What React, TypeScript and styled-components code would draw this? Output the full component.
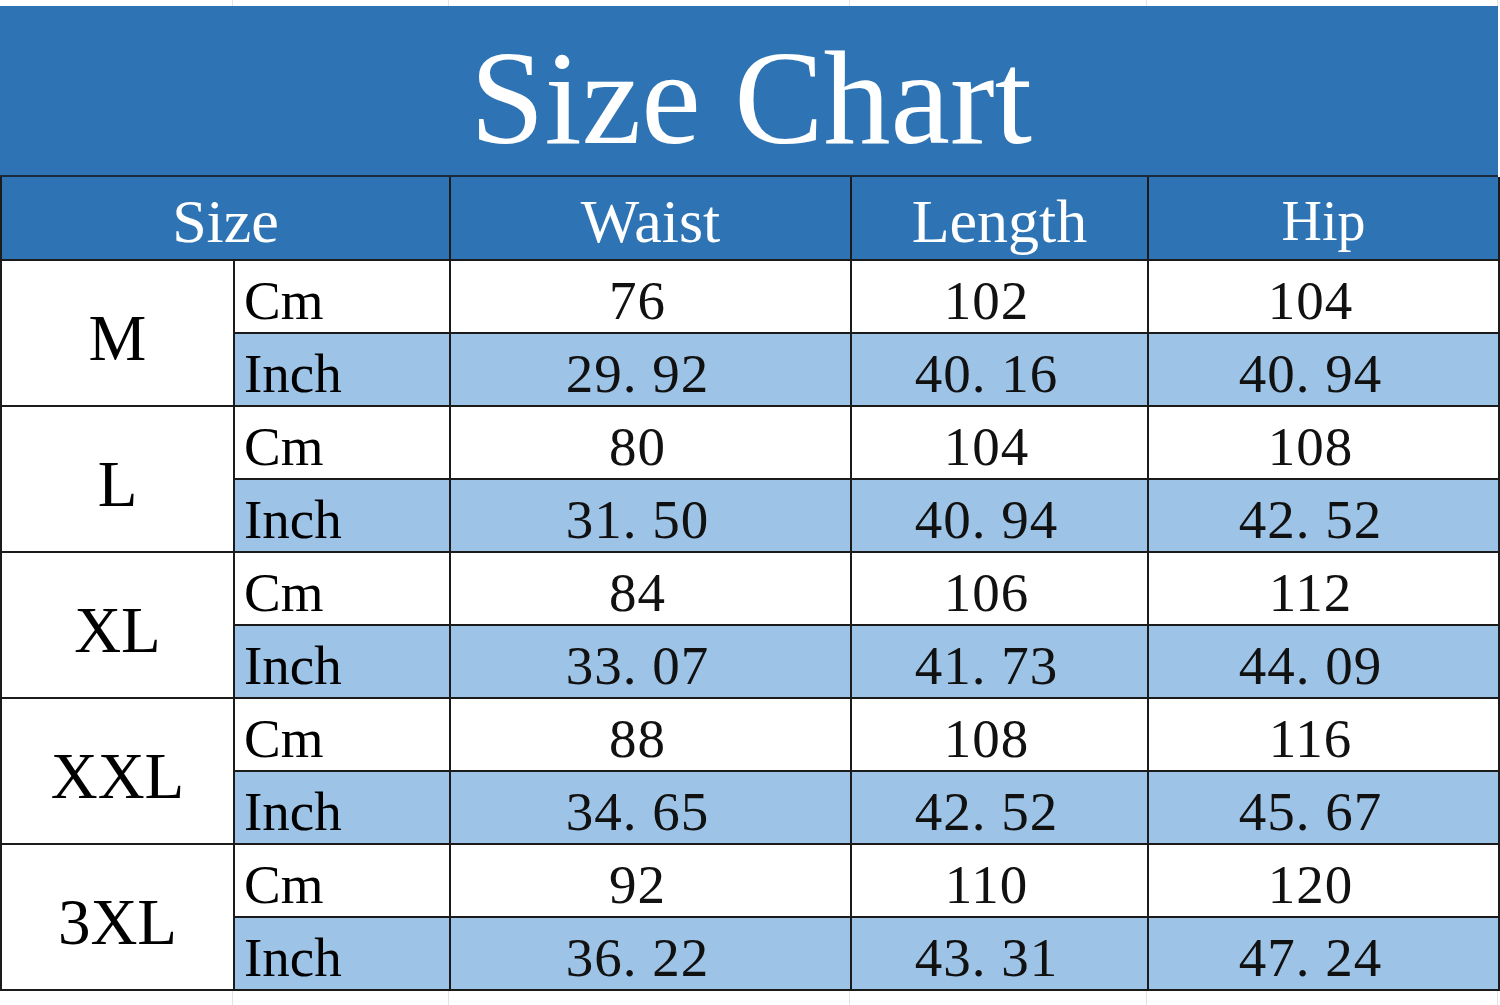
import React from 'react';
import styled, { createGlobalStyle } from 'styled-components';

type Row = { size: string; cm: string[]; inch: string[] };

const rows: Row[] = [
  { size: 'M', cm: ['76', '102', '104'], inch: ['29. 92', '40. 16', '40. 94'] },
  { size: 'L', cm: ['80', '104', '108'], inch: ['31. 50', '40. 94', '42. 52'] },
  { size: 'XL', cm: ['84', '106', '112'], inch: ['33. 07', '41. 73', '44. 09'] },
  { size: 'XXL', cm: ['88', '108', '116'], inch: ['34. 65', '42. 52', '45. 67'] },
  { size: '3XL', cm: ['92', '110', '120'], inch: ['36. 22', '43. 31', '47. 24'] },
];

const columns = [233, 216, 401, 297, 351];

const GlobalStyle = createGlobalStyle`
  body {
    margin: 0;
    background: #ffffff;
    font-family: 'Liberation Serif', 'Times New Roman', serif;
  }
`;

const Sheet = styled.div`
  width: 1500px;
  height: 1005px;
  overflow: hidden;
  background: #ffffff;
`;

// faint spreadsheet gridlines above and below the chart
const GridStrip = styled.div<{ $h: number }>`
  display: grid;
  grid-template-columns: ${columns.map((c) => `${c}px`).join(' ')} 2px;
  height: ${(p) => p.$h}px;

  > span {
    border-right: 1px solid #e3e3e3;
  }
`;

const TitleBar = styled.div`
  width: 1498px;
  height: 171px;
  background: #2e74b5;
  border-bottom: 2px solid #1b2a3a;
  display: flex;
  align-items: flex-end;
  justify-content: center;
  box-sizing: border-box;
`;

const Title = styled.h1`
  margin: 0 0 10px 4px;
  font-size: 134px;
  line-height: 1;
  font-weight: 400;
  color: #ffffff;
  font-family: 'Liberation Serif', 'Times New Roman', serif;
`;

const Table = styled.table`
  width: 1498px;
  border-collapse: collapse;
  table-layout: fixed;
  font-family: 'Liberation Serif', 'Times New Roman', serif;
`;

const HeadCell = styled.th<{ $small?: boolean }>`
  height: 76px;
  padding: 6px 0 0;
  background: #2e74b5;
  color: #ffffff;
  font-size: ${(p) => (p.$small ? 56 : 62)}px;
  font-weight: 400;
  text-align: center;
  border: 2px solid #1b1b1b;
  border-top: none;
`;

const SizeCell = styled.td`
  padding: 10px 0 0;
  background: #ffffff;
  color: #000000;
  font-size: 65px;
  text-align: center;
  border: 2px solid #1b1b1b;
`;

const UnitCell = styled.td<{ $shade?: boolean }>`
  height: 64px;
  padding: 7px 0 0 9px;
  background: ${(p) => (p.$shade ? '#9dc3e6' : '#ffffff')};
  color: #000000;
  font-size: 55px;
  text-align: left;
  border: 2px solid #1b1b1b;
`;

const ValueCell = styled.td<{ $shade?: boolean }>`
  height: 64px;
  padding: 7px 26px 0 0;
  background: ${(p) => (p.$shade ? '#9dc3e6' : '#ffffff')};
  color: #111111;
  font-size: 55px;
  letter-spacing: 1px;
  text-align: center;
  border: 2px solid #1b1b1b;
  white-space: pre;
`;

const App = () => {
  return (
    <Sheet>
      <GlobalStyle />
      <GridStrip $h={6}>
        {columns.map((c) => (
          <span key={c} />
        ))}
      </GridStrip>
      <TitleBar>
        <Title>Size Chart</Title>
      </TitleBar>
      <Table>
        <colgroup>
          {columns.map((c, i) => (
            <col key={i} style={{ width: c }} />
          ))}
        </colgroup>
        <thead>
          <tr>
            <HeadCell colSpan={2}>Size</HeadCell>
            <HeadCell>Waist</HeadCell>
            <HeadCell>Length</HeadCell>
            <HeadCell $small>Hip</HeadCell>
          </tr>
        </thead>
        <tbody>
          {rows.map((row) => (
            <React.Fragment key={row.size}>
              <tr>
                <SizeCell rowSpan={2}>{row.size}</SizeCell>
                <UnitCell>Cm</UnitCell>
                {row.cm.map((v, i) => (
                  <ValueCell key={i}>{v}</ValueCell>
                ))}
              </tr>
              <tr>
                <UnitCell $shade>Inch</UnitCell>
                {row.inch.map((v, i) => (
                  <ValueCell key={i} $shade>
                    {v}
                  </ValueCell>
                ))}
              </tr>
            </React.Fragment>
          ))}
        </tbody>
      </Table>
      <GridStrip $h={20}>
        {columns.map((c) => (
          <span key={c} />
        ))}
      </GridStrip>
    </Sheet>
  );
};

export default App;
